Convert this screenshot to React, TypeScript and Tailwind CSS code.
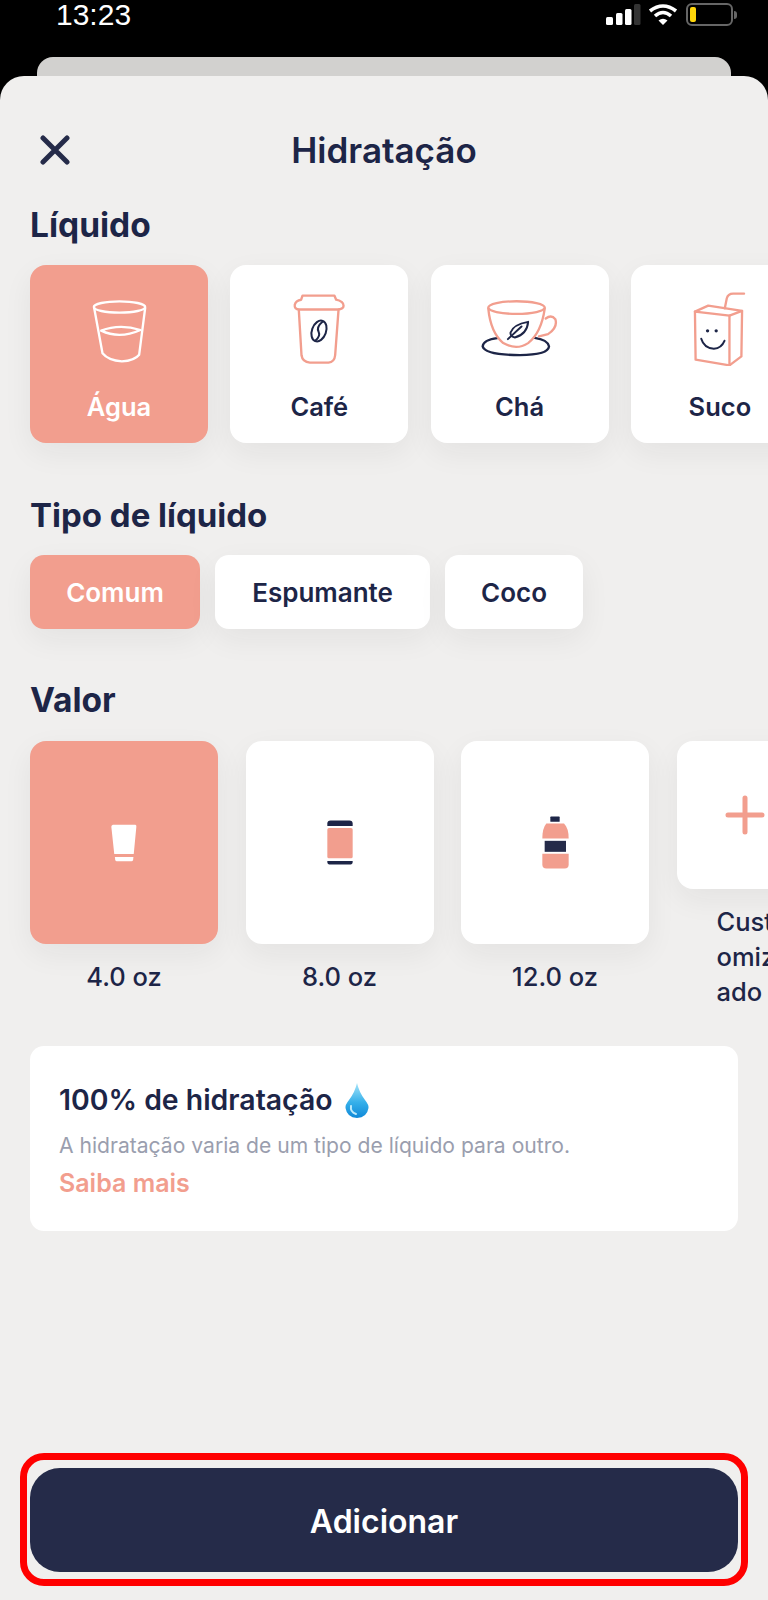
const navy = '#1d2547'
const salmon = '#f29e8e'

const StatusIcons = () => (
  <div className="flex items-center">
    <svg width="36" height="22" viewBox="0 0 36 22">
      <rect x="0" y="13" width="7" height="8" rx="1.5" fill="#fff" />
      <rect x="10" y="9" width="6.5" height="12" rx="1.5" fill="#fff" />
      <rect x="19" y="5" width="6.5" height="16" rx="1.5" fill="#fff" />
      <rect x="28" y="0" width="6.5" height="21" rx="1.5" fill="#333" />
    </svg>
    <svg className="ml-[6px]" width="30" height="23" viewBox="0 0 30 23" fill="none" stroke="#fff" strokeWidth="3.6">
      <path d="M2 8 Q15 -2 28 8" />
      <path d="M7 13 Q15 6 23 13" />
      <path d="M15 22 L10.5 17.5 Q15 14 19.5 17.5 Z" fill="#fff" stroke="none" />
    </svg>
    <div className="ml-[8px] flex items-center">
      <div className="w-[47px] h-[23px] rounded-[6px] border-2 border-[#666] p-[2px]">
        <div className="w-[6px] h-full rounded-[2px] bg-[#ffd60a]" />
      </div>
      <div className="ml-[1px] w-[3px] h-[8px] rounded-r-sm bg-[#666]" />
    </div>
  </div>
)

const GlassIcon = () => (
  <svg width="57" height="65" viewBox="270 140 170 195" fill="none" stroke="#fff" strokeWidth="7" strokeLinecap="round" strokeLinejoin="round">
    <ellipse cx="355" cy="167" rx="77" ry="17" />
    <path d="M279 170 L304 306 Q322 328 362 330 Q400 328 414 310 L432 170" />
    <path d="M300 238 Q355 216 418 236 Q355 264 300 238 Z" />
  </svg>
)

const CoffeeIcon = () => (
  <svg width="52" height="70" viewBox="880 133 154 208" fill="none" stroke={salmon} strokeWidth="7" strokeLinecap="round" strokeLinejoin="round">
    <path d="M908 138 H1003 L1008 150 Q1030 155 1030 168 Q1030 178 1012 179 H898 Q883 178 885 165 Q888 152 904 150 Z" />
    <path d="M897 180 L905 315 Q908 335 930 337 H985 Q1003 335 1005 315 L1015 180" />
    <g stroke={navy} strokeWidth="6">
      <ellipse cx="957" cy="243" rx="21" ry="32" transform="rotate(20 957 243)" />
      <path d="M968 215 Q948 232 956 246 Q962 258 946 272" />
    </g>
  </svg>
)

const TeaIcon = () => (
  <svg width="77" height="57" viewBox="183 153 232 170" fill="none" stroke={salmon} strokeWidth="7" strokeLinecap="round" strokeLinejoin="round">
    <path d="M232 267 Q190 272 188 292 Q195 318 300 318 Q385 318 388 292 Q385 272 345 266" stroke={navy} />
    <ellipse cx="290" cy="175" rx="85" ry="19" />
    <path d="M205 178 Q212 250 250 282 Q290 305 325 282 Q365 250 375 178" />
    <path d="M378 208 Q395 195 407 210 Q415 235 385 255 L358 262" />
    <g stroke={navy} strokeWidth="6">
      <path d="M272 250 Q280 226 325 218 Q322 255 285 265 Q270 262 272 250 Z" />
      <path d="M264 270 L305 232" />
    </g>
  </svg>
)

const JuiceIcon = () => (
  <svg width="53" height="74" viewBox="823 121 158 223" fill="none" stroke={salmon} strokeWidth="7" strokeLinecap="round" strokeLinejoin="round">
    <path d="M828 180 L830 325 L932 342 L932 192 Z" />
    <path d="M828 180 L868 162 L970 178 L932 192" />
    <path d="M932 342 L968 315 L970 178" />
    <path d="M918 170 L924 140 Q928 125 945 126 L976 126" />
    <circle cx="866" cy="238" r="5" fill={navy} stroke="none" />
    <circle cx="892" cy="238" r="5" fill={navy} stroke="none" />
    <path d="M847 262 Q855 290 885 292 Q908 290 917 268" stroke={navy} strokeWidth="6" />
  </svg>
)

const SmallGlass = () => (
  <svg width="26" height="38" viewBox="330 281 80 114" fill="#fff">
    <path d="M336 282 H405 Q409 283 408 288 L400 372 H340 L331 288 Q331 283 336 282 Z" />
    <path d="M342 381 H399 L398 390 Q397 394 393 394 H348 Q344 394 343 390 Z" />
  </svg>
)

const CanIcon = () => (
  <svg width="26" height="45" viewBox="979 270 79 136">
    <path d="M980 288 V280 Q980 271 990 271 H1047 Q1057 271 1057 280 V288 Z" fill={navy} />
    <rect x="980" y="294" width="77" height="92" rx="5" fill={salmon} />
    <path d="M980 394 H1057 V397 Q1057 405 1047 405 H990 Q980 405 980 397 Z" fill={navy} />
  </svg>
)

const BottleIcon = () => (
  <svg width="27" height="53" viewBox="427 259 81 158">
    <rect x="452" y="260" width="28" height="16" rx="2" fill={navy} />
    <path d="M440 281 H493 Q507 295 507 326 H428 Q428 295 440 281 Z" fill={salmon} />
    <rect x="435" y="333" width="64" height="33" fill="#252b49" />
    <path d="M428 372 H507 V405 Q507 416 495 416 H440 Q428 416 428 405 Z" fill={salmon} />
  </svg>
)

const DropIcon = () => (
  <svg className="ml-[12px]" width="24" height="35" viewBox="0 0 24 35">
    <defs>
      <linearGradient id="drop" x1="0" y1="0" x2="0" y2="1">
        <stop offset="0" stopColor="#a5e4f9" />
        <stop offset="0.55" stopColor="#36b0ea" />
        <stop offset="1" stopColor="#1089d8" />
      </linearGradient>
    </defs>
    <path d="M12 0 Q14 9 20 17 Q24 22 23.5 25 Q22 34.5 12 35 Q2 34.5 .5 25 Q0 22 4 17 Q10 9 12 0 Z" fill="url(#drop)" />
    <path d="M6 23 Q5 29 11 31" fill="none" stroke="#bdeafb" strokeWidth="2" strokeLinecap="round" />
  </svg>
)

const liquids = [
  { name: 'Água', icon: <GlassIcon />, active: true, pad: 'mt-[33px]' },
  { name: 'Café', icon: <CoffeeIcon />, active: false, pad: 'mt-[29px]' },
  { name: 'Chá', icon: <TeaIcon />, active: false, pad: 'mt-[35px]' },
  { name: 'Suco', icon: <JuiceIcon />, active: false, pad: 'mt-[27px]' },
]

const kinds = [
  { name: 'Comum', width: 'w-[170px]', active: true },
  { name: 'Espumante', width: 'w-[215px]', active: false },
  { name: 'Coco', width: 'w-[138px]', active: false },
]

const amounts = [
  { label: '4.0 oz', icon: <SmallGlass />, active: true },
  { label: '8.0 oz', icon: <CanIcon />, active: false },
  { label: '12.0 oz', icon: <BottleIcon />, active: false },
]

const cardShadow = 'shadow-[0_10px_30px_rgba(40,30,30,0.06)]'

const App = () => {
  return (
    <div className="w-[768px] h-[1600px] overflow-hidden bg-black flex flex-col font-['Inter',sans-serif] text-[#1d2547]">
      {/* Status bar */}
      <div className="h-[57px] shrink-0 pl-[56px] pr-[31px] flex items-start justify-between">
        <span className="font-['Liberation_Sans',sans-serif] text-white text-[30px] leading-[30px]">13:23</span>
        <div className="mt-[3px]">
          <StatusIcons />
        </div>
      </div>

      <div className="h-[19px] shrink-0 mx-[37px] rounded-t-[16px] bg-[#d2d1cf]" />

      {/* Sheet */}
      <div className="flex-1 rounded-t-[24px] bg-[#f0efee] pt-[54px] flex flex-col">
        <div className="h-[40px] relative flex items-center justify-center">
          <svg className="absolute left-[40px] top-[5px]" width="30" height="30" viewBox="0 0 30 30" fill="none" stroke="#252b49" strokeWidth="5" strokeLinecap="round">
            <path d="M3 3 L27 27 M27 3 L3 27" />
          </svg>
          <h1 className="text-[35px] font-semibold leading-[40px]">Hidratação</h1>
        </div>

        <h2 className="mt-[35px] ml-[30px] h-[40px] text-[33.5px] leading-[40px] font-bold">Líquido</h2>
        <div className="mt-[20px] ml-[30px] flex gap-[22.3px]">
          {liquids.map((item) => (
            <div
              key={item.name}
              className={`w-[178px] h-[178px] shrink-0 rounded-[16px] flex flex-col items-center ${cardShadow} ${item.active ? 'bg-[#f29e8e] text-white' : 'bg-white'}`}
            >
              <div className={`h-[100px] flex justify-center ${item.pad}`}>{item.icon}</div>
              <span className="text-[25.5px] font-semibold leading-[30px] mt-auto mb-[21px]">{item.name}</span>
            </div>
          ))}
        </div>

        <h2 className="mt-[52px] ml-[30px] h-[40px] text-[33px] leading-[40px] font-bold">Tipo de líquido</h2>
        <div className="mt-[20px] ml-[30px] flex gap-[15px]">
          {kinds.map((kind) => (
            <div
              key={kind.name}
              className={`${kind.width} h-[74px] rounded-[14px] flex items-center justify-center text-[26px] font-semibold ${cardShadow} ${kind.active ? 'bg-[#f29e8e] text-white' : 'bg-white'}`}
            >
              {kind.name}
            </div>
          ))}
        </div>

        <h2 className="mt-[51px] ml-[30px] h-[40px] text-[33.5px] leading-[40px] font-bold">Valor</h2>
        <div className="mt-[21px] ml-[30px] flex items-start gap-[27.5px]">
          {amounts.map((amount) => (
            <div key={amount.label} className="w-[188px] shrink-0 flex flex-col items-center">
              <div className={`w-full h-[203px] rounded-[16px] flex items-center justify-center ${cardShadow} ${amount.active ? 'bg-[#f29e8e]' : 'bg-white'}`}>
                {amount.icon}
              </div>
              <span className="mt-[15px] text-[25.5px] font-medium leading-[35px]">{amount.label}</span>
            </div>
          ))}
          <div className="w-[137px] shrink-0">
            <div className={`h-[148px] rounded-[16px] bg-white flex items-center justify-center ${cardShadow}`}>
              <svg width="40" height="40" viewBox="0 0 40 40" stroke={salmon} strokeWidth="5" strokeLinecap="round">
                <path d="M20 3 V37 M3 20 H37" />
              </svg>
            </div>
            <p className="mt-[15px] ml-[40px] w-[66px] text-[25.5px] font-medium leading-[35px] break-all">Customizado</p>
          </div>
        </div>

        {/* Info */}
        <div className="mt-[37px] mx-[30px] h-[185px] rounded-[14px] bg-white pl-[29px] pr-[30px] pt-[37px]">
          <div className="flex items-center h-[34px]">
            <span className="text-[28.4px] font-semibold leading-[34px]">100% de hidratação</span>
            <DropIcon />
          </div>
          <p className="mt-[16px] text-[21.1px] leading-[26px] text-[#9a9eae]">A hidratação varia de um tipo de líquido para outro.</p>
          <p className="mt-[8px] text-[25px] leading-[32px] font-semibold text-[#f29e8e]">Saiba mais</p>
        </div>

        {/* Action */}
        <div className="mt-auto mb-[14px] mx-[20px] rounded-[24px] border-[7px] border-[#ff0000] px-[3px] pt-[8px] pb-[7px]">
          <button className="w-full h-[104px] pt-[3px] rounded-[30px] bg-[#252b49] text-white text-[32px] font-semibold">Adicionar</button>
        </div>
      </div>
    </div>
  )
}

export default App
